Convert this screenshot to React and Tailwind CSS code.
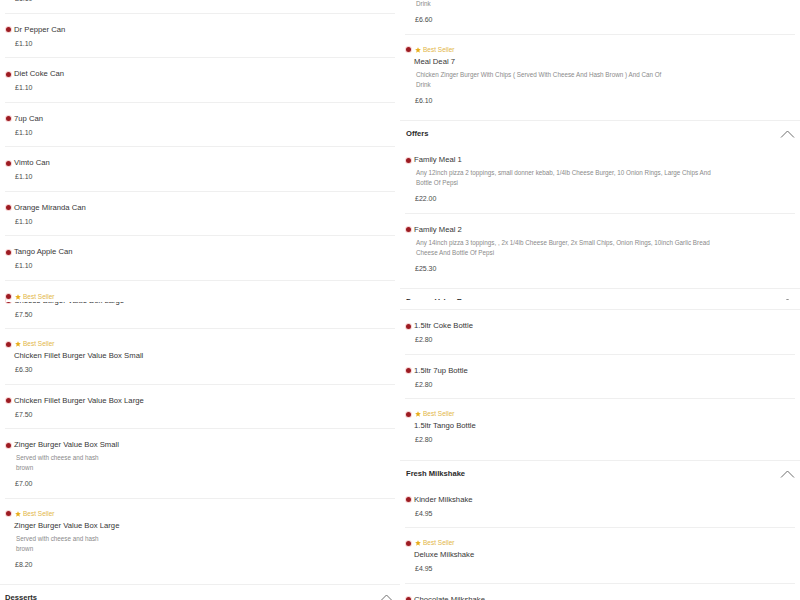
import React from 'react';
import clsx from 'clsx';

const LEFT_DESC = 'max-w-[96px]';
const RIGHT_DESC = 'max-w-[310px]';

function Dot() {
  return <span className="block w-[5px] h-[5px] rounded-full bg-[#9c1b22] shadow-[0_0_0_1px_#f7d4d4] shrink-0" />;
}

function Star() {
  return (
    <svg width="6" height="6" viewBox="0 0 10 10" className="shrink-0">
      <polygon points="5,0.4 6.4,3.5 9.8,3.8 7.2,6 8,9.5 5,7.7 2,9.5 2.8,6 0.2,3.8 3.6,3.5" fill="#e8ae1c" />
    </svg>
  );
}

function Chevron() {
  return (
    <svg width="15" height="8" viewBox="0 0 15 8" className="shrink-0">
      <polyline points="1,7.5 7.5,1 14,7.5" fill="none" stroke="#6f6f6f" strokeWidth="1" />
    </svg>
  );
}

// one menu row; `glitch` reproduces the sticky badge strip sitting over the name
function Item({ name, price, best, desc, descW = RIGHT_DESC, last, glitch }) {
  return (
    <div
      className={clsx(
        'mx-[5px] pl-[1px]',
        best && !glitch ? 'pt-[10px]' : 'pt-[11px]',
        last ? 'pb-[14.5px]' : 'pb-[8.5px] border-b border-[#efefef]'
      )}
    >
      {best && (
        <div className={clsx('flex items-center gap-[3px] h-[10px]', glitch && 'relative z-10 bg-white')}>
          <Dot />
          <div className="flex items-center gap-[2px] ml-[1px] text-[6.5px] leading-[10px] text-[#e2b548]">
            <Star />
            <span>Best Seller</span>
          </div>
        </div>
      )}
      <div className={clsx('flex items-center gap-[3px]', best && !glitch && 'mt-[2px]', glitch && '-mt-[6px]')}>
        {best && !glitch ? <span className="block w-[5px] shrink-0" /> : <Dot />}
        <span className="text-[7.7px] leading-[10px] text-[#363636]">{name}</span>
      </div>
      {desc && (
        <p className={clsx('ml-[10px] mt-[3px] text-[6.3px] leading-[10px] text-[#8a8a8a] whitespace-pre-line', descW)}>
          {desc}
        </p>
      )}
      <p className={clsx('ml-[9px] text-[7px] leading-[10px] text-[#4a4a4a]', desc ? 'mt-[6px]' : 'mt-[4px]')}>{price}</p>
    </div>
  );
}

function Header({ title, left }) {
  return (
    <div className={clsx('flex items-center justify-between pt-[7px] pb-[4px]', left ? 'pl-[5px] pr-[6px]' : 'pl-[6px] pr-[5px]')}>
      <span className="text-[7.6px] font-bold leading-[12px] text-[#2a2a2a]">{title}</span>
      <Chevron />
    </div>
  );
}

const can = '£1.10';
const served = 'Served with cheese and hash brown';
const zingerDeal = 'Chicken Zinger Burger With Chips ( Served With Cheese And Hash Brown ) And Can Of\nDrink';

export default function App() {
  return (
    <div className="w-[800px] h-[600px] overflow-hidden bg-white flex font-['Liberation_Sans',Arial,sans-serif]">
      {/* left column */}
      <div className="w-[400px] shrink-0">
        <div className="-mt-[31px] border-b border-[#efefef]">
          <Item name="Coke Can" price={can} />
          <Item name="Dr Pepper Can" price={can} />
          <Item name="Diet Coke Can" price={can} />
          <Item name="7up Can" price={can} />
          <Item name="Vimto Can" price={can} />
          <Item name="Orange Miranda Can" price={can} />
          <Item name="Tango Apple Can" price={can} />
          <Item name="Cheese Burger Value Box Large" price="£7.50" best glitch />
          <Item name="Chicken Fillet Burger Value Box Small" price="£6.30" best />
          <Item name="Chicken Fillet Burger Value Box Large" price="£7.50" />
          <Item name="Zinger Burger Value Box Small" price="£7.00" desc={served} descW={LEFT_DESC} />
          <Item name="Zinger Burger Value Box Large" price="£8.20" desc={served} descW={LEFT_DESC} best last />
        </div>
        <Header title="Desserts" left />
      </div>

      {/* right column */}
      <div className="w-[400px] shrink-0">
        <div className="-mt-[35px] border-b border-[#efefef]">
          <Item name="Meal Deal 6" price="£6.60" desc={zingerDeal} />
          <Item name="Meal Deal 7" price="£6.10" best last desc={zingerDeal} />
        </div>
        <Header title="Offers" />
        <div className="border-b border-[#efefef]">
          <Item
            name="Family Meal 1"
            price="£22.00"
            desc="Any 12inch pizza 2 toppings, small donner kebab, 1/4lb Cheese Burger, 10 Onion Rings, Large Chips And Bottle Of Pepsi"
          />
          <Item
            name="Family Meal 2"
            price="£25.30"
            last
            desc="Any 14inch pizza 3 toppings, , 2x 1/4lb Cheese Burger, 2x Small Chips, Onion Rings, 10inch Garlic Bread Cheese And Bottle Of Pepsi"
          />
        </div>
        <div className="h-[21px] border-b border-[#efefef] pt-[9px]">
          <div className="h-[2px] overflow-hidden">
            <div className="-mt-[2px] flex items-center justify-between pl-[6px] pr-[5px]">
              <span className="text-[7.6px] font-bold leading-[12px] text-[#2a2a2a]">Donner Value Box</span>
              <Chevron />
            </div>
          </div>
        </div>
        <div className="border-b border-[#efefef]">
          <Item name="1.5ltr Coke Bottle" price="£2.80" />
          <Item name="1.5ltr 7up Bottle" price="£2.80" />
          <Item name="1.5ltr Tango Bottle" price="£2.80" best last />
        </div>
        <Header title="Fresh Milkshake" />
        <div>
          <Item name="Kinder Milkshake" price="£4.95" />
          <Item name="Deluxe Milkshake" price="£4.95" best />
          <Item name="Chocolate Milkshake" price="£4.95" />
        </div>
      </div>
    </div>
  );
}
